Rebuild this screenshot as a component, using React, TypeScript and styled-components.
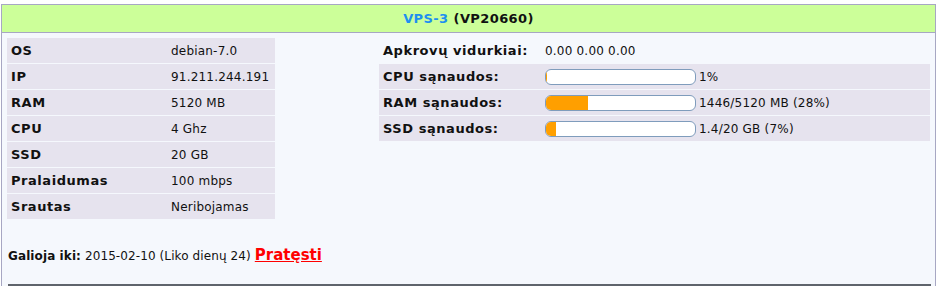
import React from 'react';
import styled, { createGlobalStyle } from 'styled-components';

const GlobalStyle = createGlobalStyle`
  body {
    margin: 0;
    background: #ffffff;
    font-family: Verdana, 'DejaVu Sans', sans-serif;
    color: #111;
  }
`;

const Box = styled.div`
  margin: 4px 0 0 1px;
  width: 933px;
  border: 1px solid #a7a7c3;
  border-bottom: none;
  background: #f5f8fd;
`;

const Header = styled.div`
  height: 27px;
  background: #ccff99;
  border-bottom: 1px solid #a7a7c3;
  display: flex;
  align-items: center;
  justify-content: center;
  font-weight: bold;
  font-size: 13px;
  letter-spacing: 0.4px;
  gap: 5px;
`;

const Name = styled.span`
  color: #1e8ff0;
`;

const Body = styled.div`
  display: flex;
  align-items: flex-start;
  justify-content: space-between;
  padding: 5px 5px 0 5px;
`;

const InfoTable = styled.div<{ $width: number; $labelWidth: number }>`
  width: ${(p) => p.$width}px;
  display: grid;
  grid-template-columns: ${(p) => p.$labelWidth}px 1fr;
  align-content: start;
  row-gap: 1px;
`;

const Row = styled.div<{ $plain?: boolean }>`
  display: contents;
  & > * {
    background: ${(p) => (p.$plain ? 'transparent' : '#e6e3ee')};
  }
`;

const Label = styled.div`
  height: 25px;
  display: flex;
  align-items: center;
  padding-left: 4px;
  font-weight: bold;
  font-size: 13px;
  letter-spacing: 0.55px;
`;

const Value = styled.div`
  height: 25px;
  display: flex;
  align-items: center;
  font-size: 12px;
  letter-spacing: 0.2px;
  gap: 3px;
`;

const Bar = styled.div`
  width: 149px;
  height: 14px;
  border: 1px solid #7f9cbc;
  border-radius: 6px;
  background: #ffffff;
  overflow: hidden;
`;

const Fill = styled.div`
  height: 100%;
  background: #ff9f00;
`;

const Footer = styled.div`
  padding: 27px 0 0 6px;
  font-size: 12px;
  letter-spacing: 0.1px;
  display: flex;
  align-items: baseline;
  gap: 4px;
`;

const Strong = styled.b`
  font-size: 12px;
`;

const Renew = styled.a`
  color: #ff0000;
  font-weight: bold;
  font-size: 15px;
  letter-spacing: 0;
  text-decoration: underline;
`;

const Rule = styled.hr`
  margin: 20px 4px 0 6px;
  border: none;
  border-top: 2px solid #5f646c;
  height: 0;
`;

const specs: [string, string][] = [
  ['OS', 'debian-7.0'],
  ['IP', '91.211.244.191'],
  ['RAM', '5120 MB'],
  ['CPU', '4 Ghz'],
  ['SSD', '20 GB'],
  ['Pralaidumas', '100 mbps'],
  ['Srautas', 'Neribojamas'],
];

const usage: { label: string; percent: number; text: string }[] = [
  { label: 'CPU sąnaudos:', percent: 1, text: '1%' },
  { label: 'RAM sąnaudos:', percent: 28, text: '1446/5120 MB (28%)' },
  { label: 'SSD sąnaudos:', percent: 7, text: '1.4/20 GB (7%)' },
];

const App: React.FC = () => {
  return (
    <>
      <GlobalStyle />
      <Box>
        <Header>
          <Name>VPS-3</Name>
          <span>(VP20660)</span>
        </Header>
        <Body>
          <InfoTable $width={268} $labelWidth={164}>
            {specs.map(([label, value]) => (
              <Row key={label}>
                <Label>{label}</Label>
                <Value>{value}</Value>
              </Row>
            ))}
          </InfoTable>
          <InfoTable $width={551} $labelWidth={166}>
            <Row $plain>
              <Label>Apkrovų vidurkiai:</Label>
              <Value>0.00 0.00 0.00</Value>
            </Row>
            {usage.map((u) => (
              <Row key={u.label}>
                <Label>{u.label}</Label>
                <Value>
                  <Bar>
                    <Fill style={{ width: `${u.percent}%` }} />
                  </Bar>
                  {u.text}
                </Value>
              </Row>
            ))}
          </InfoTable>
        </Body>
        <Footer>
          <span>
            <Strong>Galioja iki:</Strong> 2015-02-10 (Liko dienų 24)
          </span>
          <Renew href="#">Pratęsti</Renew>
        </Footer>
        <Rule />
      </Box>
    </>
  );
};

export default App;
